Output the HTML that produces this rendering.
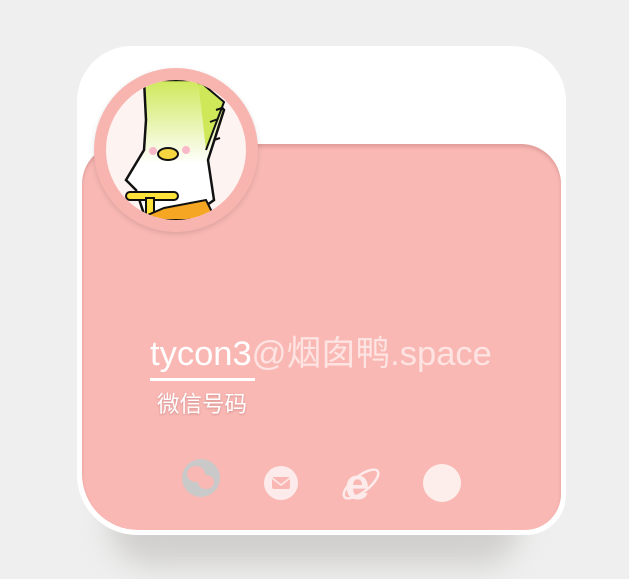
<!DOCTYPE html>
<html><head><meta charset="utf-8"><style>
body{margin:0;width:629px;height:579px;background:#efefef;position:relative;overflow:hidden;font-family:"Liberation Sans","Noto Sans CJK SC",sans-serif}
.shadow{position:absolute;left:110px;top:475px;width:410px;height:90px;border-radius:40px;background:#d0cfcd;filter:blur(14px)}
.card{position:absolute;left:77px;top:46px;width:489px;height:489px;background:#fff;border-radius:55px 55px 40px 60px}
.pink{position:absolute;left:82px;top:144px;width:479px;height:386px;background:#f9b8b4;border-radius:40px 40px 36px 56px;box-shadow:inset 0 3px 3px rgba(180,110,110,.35)}
.av{position:absolute;left:94px;top:68px;width:164px;height:164px;border-radius:50%;background:#f8b5b0;box-shadow:0 2px 6px rgba(0,0,0,.12)}
.in{position:absolute;left:12px;top:12px;width:140px;height:140px;border-radius:50%;background:#fdf3f1;overflow:hidden}
.t{position:absolute;left:150px;top:325px;font-size:34.5px;color:#fff;white-space:nowrap}
.t span{color:#fde3e1}
.ul{position:absolute;left:150px;top:378px;width:105px;height:3px;background:#fff}
.s{position:absolute;left:157px;top:387px;font-size:22.5px;color:#fff;text-shadow:0 1px 2px rgba(150,80,80,.4)}
</style></head><body>
<div class="shadow"></div>
<div class="card"></div>
<div class="pink"></div>
<div class="av"><div class="in">
<svg width="140" height="140" viewBox="0 0 140 140">
<defs><linearGradient id="g" x1="0" y1="0" x2="0" y2="1"><stop offset="0" stop-color="#cfe85a"/><stop offset="0.6" stop-color="#fff"/></linearGradient></defs>
<path d="M38 0 L90 0 L118 30 L102 80 L108 120 L80 140 L40 140 L30 110 L20 100 L38 70 L40 40 Z" fill="url(#g)" stroke="#111" stroke-width="2.5"/>
<path d="M92 0 L118 22 L100 70" fill="#cfe85a" stroke="#111" stroke-width="2"/>
<path d="M110 30 l6 -2 M104 42 l8 -3 M108 60 l6 -2" stroke="#111" stroke-width="2"/>
<ellipse cx="62" cy="74" rx="10" ry="6" fill="#f6d640" stroke="#111" stroke-width="2"/>
<circle cx="47" cy="71" r="4" fill="#f9b8c8"/><circle cx="80" cy="70" r="4" fill="#f9b8c8"/>
<rect x="20" y="112" width="52" height="8" rx="4" fill="#ffe23a" stroke="#111" stroke-width="2"/>
<rect x="40" y="118" width="8" height="22" fill="#ffe23a" stroke="#111" stroke-width="2"/>
<path d="M30 140 L58 128 L100 120 L110 140 Z" fill="#f5a623" stroke="#111" stroke-width="2"/>
<circle cx="105" cy="138" r="6" fill="#444"/>
</svg></div></div>
<div class="t">tycon3<span>@烟囱鸭.space</span></div>
<div class="ul"></div>
<div class="s">微信号码</div>
<svg style="position:absolute;left:0;top:0" width="629" height="579">
<circle cx="201" cy="478" r="19" fill="#c9c9c9"/>
<ellipse cx="196" cy="474" rx="9" ry="8" fill="#f9b8b4"/><ellipse cx="206" cy="482" rx="8" ry="7" fill="#f9b8b4"/>
<circle cx="281" cy="483" r="17" fill="#fdeaea"/>
<rect x="272" y="477" width="18" height="12" rx="2" fill="#f9b8b4"/><path d="M272 478 L281 485 L290 478" stroke="#fdeaea" stroke-width="1.6" fill="none"/>
<text x="345" y="499" font-size="44" font-weight="bold" fill="#fdeaea" font-family="Liberation Sans">e</text>
<ellipse cx="361" cy="484" rx="21" ry="8" transform="rotate(-38 361 484)" fill="none" stroke="#fdeaea" stroke-width="2.5"/>
<circle cx="442" cy="483" r="19" fill="#fdeeec"/>
</svg>
</body></html>
